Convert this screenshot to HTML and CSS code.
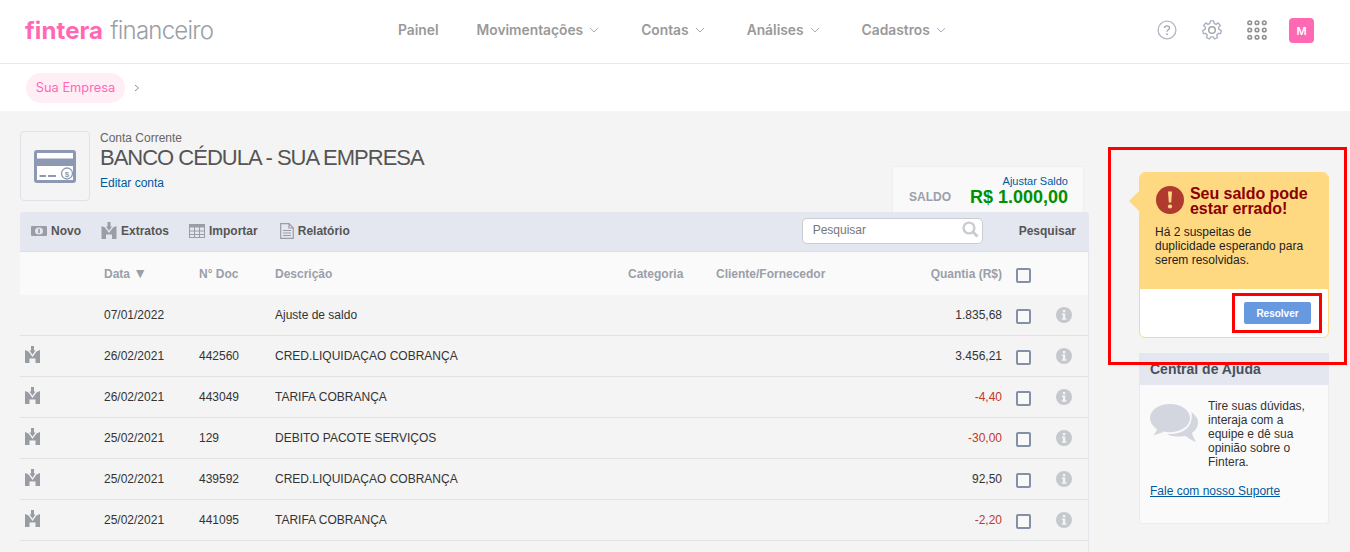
FILE: index.html
```html
<!DOCTYPE html>
<html lang="pt-BR">
<head>
<meta charset="utf-8">
<title>Fintera Financeiro</title>
<link rel="stylesheet" href="styles.css">
</head>
<body>
<svg class="defs" width="0" height="0" aria-hidden="true">
  <symbol id="bank" viewBox="0 0 15 17">
    <path d="M0 4 L3.500 5.500 L7.500 11 L11.500 5.500 L15 4 V17 H10.500 V12.500 H4.500 V17 H0 Z M6 0 H9 V4.500 H10.500 L7.500 8.700 L4.500 4.500 H6 Z"/>
  </symbol>
  <symbol id="info" viewBox="0 0 16 16">
    <circle cx="8" cy="8" r="8" fill="#c5c8cd"/>
    <rect x="6.900" y="3" width="2.400" height="2.300" fill="#f4f4f4"/>
    <path d="M5.900 6.500 H9.300 V11.200 H10.400 V12.800 H5.900 V11.200 H6.900 V8.100 H5.900 Z" fill="#f4f4f4"/>
  </symbol>
  <symbol id="chev" viewBox="0 0 10 6">
    <path d="M1 1 L5 5 L9 1" fill="none" stroke="#a9aeb8" stroke-width="1"/>
  </symbol>
</svg>

<header class="topbar">
  <div class="logo"><span class="logo-a">fintera</span><span class="logo-b">financeiro</span></div>
  <nav class="nav">
    <a class="nav-item nav-plain">Painel</a>
    <a class="nav-item">Movimentações <svg class="chev"><use href="#chev"/></svg></a>
    <a class="nav-item">Contas <svg class="chev"><use href="#chev"/></svg></a>
    <a class="nav-item">Análises <svg class="chev"><use href="#chev"/></svg></a>
    <a class="nav-item">Cadastros <svg class="chev"><use href="#chev"/></svg></a>
  </nav>
  <div class="top-icons">
    <svg class="ti" viewBox="0 0 22 22"><circle cx="11" cy="11" r="9.800" fill="none" stroke="#b4b9c9" stroke-width="1.500"/><path d="M8.200 8.800 C8.200 5.600 13.800 5.600 13.800 8.800 C13.800 10.900 11 10.700 11 13" fill="none" stroke="#a8a8ac" stroke-width="1.500"/><circle cx="11" cy="15.700" r="1" fill="#a8a8ac"/></svg>
    <svg class="ti" viewBox="0 0 22 22"><path d="M9.200 1 H12.800 L13.300 3.800 L15.500 4.800 L17.900 3.200 L20.200 6.200 L18.200 8.200 L18.700 10.200 L21.200 11.500 L20.400 15 L17.600 14.800 L16.200 16.700 L17.100 19.400 L13.900 20.900 L12.400 18.500 L9.600 18.500 L8.100 20.900 L4.900 19.400 L5.800 16.700 L4.400 14.800 L1.600 15 L.8 11.500 L3.300 10.200 L3.800 8.200 L1.800 6.200 L4.100 3.200 L6.500 4.800 L8.700 3.800 Z" fill="none" stroke="#aab0c2" stroke-width="1.500" stroke-linejoin="round"/><circle cx="11" cy="11" r="3.600" fill="none" stroke="#a4a4a8" stroke-width="1.600"/></svg>
    <svg class="ti" viewBox="0 0 22 22" fill="none" stroke="#8f8f8f" stroke-width="1.700">
      <circle cx="3" cy="3" r="2"/><circle cx="11" cy="3" r="2"/><circle cx="19" cy="3" r="2"/>
      <circle cx="3" cy="11" r="2"/><circle cx="11" cy="11" r="2"/><circle cx="19" cy="11" r="2"/>
      <circle cx="3" cy="19" r="2"/><circle cx="11" cy="19" r="2"/><circle cx="19" cy="19" r="2"/>
    </svg>
    <div class="avatar">M</div>
  </div>
</header>

<div class="crumbs">
  <span class="pill">Sua Empresa</span>
  <svg class="crumb-sep" viewBox="0 0 6 8"><path d="M1 1 L4.500 4 L1 7" fill="none" stroke="#8d8d98" stroke-width="1"/></svg>
</div>

<main class="main">
  <section class="content">
    <div class="account">
      <div class="account-id">
        <div class="card-box">
          <svg class="card-ico" viewBox="0 0 42 33">
            <rect width="42" height="33" rx="3" fill="#8d99b2"/>
            <rect x="3" y="3" width="36" height="5.500" fill="#fff"/>
            <rect x="3" y="16" width="36" height="14" fill="#fff"/>
            <rect x="5.500" y="25" width="6.500" height="2" fill="#8d99b2"/>
            <rect x="14" y="25" width="8" height="2" fill="#8d99b2"/>
            <circle cx="33" cy="23.500" r="5.500" fill="none" stroke="#8d99b2" stroke-width="1.300"/>
            <text class="card-dollar" x="33" y="26.500" text-anchor="middle">$</text>
          </svg>
        </div>
        <div class="account-text">
          <div class="account-type">Conta Corrente</div>
          <h1 class="account-name">BANCO CÉDULA - SUA EMPRESA</h1>
          <a class="link edit">Editar conta</a>
        </div>
      </div>
      <div class="balance">
        <a class="link adjust">Ajustar Saldo</a>
        <div class="balance-line"><span class="balance-label">SALDO</span><span class="balance-value">R$ 1.000,00</span></div>
      </div>
    </div>

    <div class="toolbar">
      <a class="tool tool-novo"><svg class="tool-ico" viewBox="0 0 16 12"><rect y="1" width="16" height="10" rx="1" fill="#9a9da5"/><ellipse cx="8" cy="6" rx="4" ry="3.600" fill="#e4e7ef"/><rect x="7.200" y="3.800" width="1.600" height="4.400" fill="#9a9da5"/></svg>Novo</a>
      <a class="tool tool-ext"><svg class="tool-ico bank-ico"><use href="#bank"/></svg>Extratos</a>
      <a class="tool tool-imp"><svg class="tool-ico" viewBox="0 0 16 14"><rect x=".5" y=".5" width="15" height="13" fill="none" stroke="#9a9da5"/><path d="M0 0 H16 V3.500 H0 Z" fill="#9a9da5"/><path d="M5.500 3 V14 M10.500 3 V14 M0 7 H16 M0 10.500 H16" stroke="#9a9da5"/></svg>Importar</a>
      <a class="tool"><svg class="tool-doc" viewBox="0 0 14 16"><path d="M.7 .7 H9 L13.300 5 V15.300 H.7 Z M9 .7 V5 H13.300" fill="none" stroke="#9a9da5" stroke-width="1.200"/><path d="M3 7.500 H11 M3 10 H11 M3 12.500 H11" stroke="#9a9da5"/></svg>Relatório</a>
      <div class="search">
        <span class="search-ph">Pesquisar</span>
        <svg class="search-ico" viewBox="0 0 17 17"><circle cx="7" cy="7" r="5.400" fill="none" stroke="#c9ccd2" stroke-width="2.400"/><path d="M11 11 L15.500 15.500" stroke="#c9ccd2" stroke-width="3"/></svg>
      </div>
      <a class="tool search-label">Pesquisar</a>
    </div>

    <div class="row head">
      <span></span><span>Data <span class="sort">▼</span></span><span>N° Doc</span><span>Descrição</span><span>Categoria</span><span>Cliente/Fornecedor</span><span class="num">Quantia (R$)</span><i class="check"></i><span></span>
    </div>
    <div class="row">
      <span></span><span>07/01/2022</span><span></span><span>Ajuste de saldo</span><span></span><span></span><span class="num">1.835,68</span><i class="check"></i><svg class="info"><use href="#info"/></svg>
    </div>
    <div class="row">
      <svg class="row-bank"><use href="#bank"/></svg><span>26/02/2021</span><span>442560</span><span>CRED.LIQUIDAÇAO COBRANÇA</span><span></span><span></span><span class="num">3.456,21</span><i class="check"></i><svg class="info"><use href="#info"/></svg>
    </div>
    <div class="row">
      <svg class="row-bank"><use href="#bank"/></svg><span>26/02/2021</span><span>443049</span><span>TARIFA COBRANÇA</span><span></span><span></span><span class="num neg">-4,40</span><i class="check"></i><svg class="info"><use href="#info"/></svg>
    </div>
    <div class="row">
      <svg class="row-bank"><use href="#bank"/></svg><span>25/02/2021</span><span>129</span><span>DEBITO PACOTE SERVIÇOS</span><span></span><span></span><span class="num neg">-30,00</span><i class="check"></i><svg class="info"><use href="#info"/></svg>
    </div>
    <div class="row">
      <svg class="row-bank"><use href="#bank"/></svg><span>25/02/2021</span><span>439592</span><span>CRED.LIQUIDAÇAO COBRANÇA</span><span></span><span></span><span class="num">92,50</span><i class="check"></i><svg class="info"><use href="#info"/></svg>
    </div>
    <div class="row">
      <svg class="row-bank"><use href="#bank"/></svg><span>25/02/2021</span><span>441095</span><span>TARIFA COBRANÇA</span><span></span><span></span><span class="num neg">-2,20</span><i class="check"></i><svg class="info"><use href="#info"/></svg>
    </div>
    <div class="row row-tail"></div>
  </section>

  <aside class="side">
    <div class="alert">
      <div class="alert-top">
        <div class="alert-head">
          <svg class="alert-ico" viewBox="0 0 28 28"><circle cx="14" cy="14" r="14" fill="#b03a2e"/><path d="M12 5.500 H16 L15.200 16.500 H12.800 Z" fill="#ffd982"/><circle cx="14" cy="20.500" r="2.100" fill="#ffd982"/></svg>
          <div class="alert-title">Seu saldo pode estar errado!</div>
        </div>
        <p class="alert-text">Há 2 suspeitas de duplicidade esperando para serem resolvidas.</p>
      </div>
      <div class="alert-foot"><button class="btn">Resolver</button></div>
    </div>
    <div class="help">
      <div class="help-head">Central de Ajuda</div>
      <div class="help-body">
        <div class="help-row">
          <svg class="help-ico" viewBox="0 0 48 39"><path d="M20 0 C9 0 0 6 0 14 C0 18.500 3 22.500 7 25 C6.500 27 5 29.500 3.500 31 C7.500 30.500 11.500 28.500 14 27.500 C16 28 18 28.200 20 28.200 C31 28.200 40 22 40 14 C40 6 31 0 20 0 Z" fill="#d3d6df"/><path d="M41.500 8 C44.500 10.500 48 14 48 18.500 C48 23 45.500 26.500 42 29 C42.500 31.500 44.500 35 46 38 C42 36.500 37.500 33.500 35 32 C29 33 22 33 17 30 C29 31 44 26 41.500 8 Z" fill="#d3d6df"/></svg>
          <p class="help-text">Tire suas dúvidas, interaja com a equipe e dê sua opinião sobre o Fintera.</p>
        </div>
        <a class="link support">Fale com nosso Suporte</a>
      </div>
    </div>
  </aside>
</main>

<div class="mark mark-outer"></div>
<div class="mark mark-inner"></div>
</body>
</html>
```
FILE: styles.css
```css
* { box-sizing: border-box; }
html, body { margin: 0; height: 552px; overflow: hidden; }
body { background: #f4f4f4; font-family: "Liberation Sans", Arial, sans-serif; font-size: 12px; color: #333; position: relative; }
.defs { position: absolute; }

.topbar { height: 64px; background: #fff; border-bottom: 1px solid #eaeaea; display: flex; align-items: center; padding: 0 36px 2px 25px; }
.logo { width: 373px; font-family: Inter, sans-serif; font-size: 24px; display: flex; gap: 7px; letter-spacing: .1px; }
.logo-a { color: #ff69b4; font-weight: 700; }
.logo-b { color: #9a9ea6; font-weight: 300; letter-spacing: -.75px; }
.nav { display: flex; gap: 38px; font-family: Inter, sans-serif; font-size: 13.8px; font-weight: 600; color: #999; padding-bottom: 2px; }
.nav-item { display: flex; align-items: center; gap: 6px; margin-right: 4px; white-space: nowrap; }
.nav-plain { margin-right: 0; }
.chev { width: 10px; height: 6px; }
.top-icons { margin-left: auto; display: flex; align-items: center; gap: 25px; }
.ti { width: 20px; height: 20px; display: block; margin-bottom: 1px; }
.avatar { width: 25px; height: 25px; margin-left: -3px; border-radius: 4px; background: #ff69b4; color: #fff; font-family: Inter, sans-serif; font-size: 11px; font-weight: 600; display: flex; align-items: center; justify-content: center; }

.crumbs { height: 47px; background: #fff; display: flex; align-items: center; padding-left: 26px; gap: 9px; }
.pill { height: 30px; width: 99px; border-radius: 15px; background: #ffeef6; color: #ff69b4; font-family: Inter, sans-serif; font-size: 12.8px; display: flex; align-items: center; justify-content: center; }
.crumb-sep { width: 6px; height: 8px; }

.main { display: flex; padding: 20px 21px 0 20px; gap: 50px; }
.content { width: 1069px; flex: none; }
.side { width: 190px; flex: none; padding-top: 41px; display: flex; flex-direction: column; gap: 15px; }

.account { display: flex; justify-content: space-between; align-items: flex-end; padding-right: 5px; height: 81px; }
.account-id { display: flex; gap: 10px; align-self: flex-start; }
.card-box { width: 70px; height: 70px; border: 1px solid #dfe1e8; border-radius: 4px; display: flex; align-items: center; justify-content: center; }
.card-ico { width: 42px; height: 33px; }
.card-dollar { font-size: 8px; font-weight: 700; fill: #8d99b2; }
.account-type { color: #666; line-height: 14px; }
.account-name { margin: 0; font-size: 22px; font-weight: 400; letter-spacing: -1px; color: #555; line-height: 26px; }
.link { color: #005a9e; }
.edit { display: block; margin-top: 5px; line-height: 14px; }
.balance { width: 192px; height: 46px; background: #f9f9f9; border: 1px solid #eee; border-bottom: 0; padding: 8px 15px 0 16px; display: flex; flex-direction: column; align-items: flex-end; }
.adjust { font-size: 11px; line-height: 12px; }
.balance-line { width: 100%; display: flex; justify-content: space-between; align-items: center; line-height: 20px; }
.balance-label { color: #9a9fa9; font-weight: 700; }
.balance-value { color: #009000; font-size: 18px; font-weight: 700; }

.toolbar { height: 40px; background: #e4e7ef; border-bottom: 1px solid #dcdee4; border-radius: 3px 3px 0 0; display: flex; align-items: center; padding: 0 13px 2px 11px; color: #555; font-weight: 700; }
.tool { display: flex; align-items: center; gap: 4px; }
.tool-novo { margin-right: 20px; }
.tool-ext { margin-right: 20px; }
.tool-imp { margin-right: 22px; }
.tool-ico { width: 16px; height: 16px; fill: #9a9da5; }
.bank-ico { height: 17px; }
.tool-doc { width: 14px; height: 16px; }
.search { margin-left: auto; width: 181px; height: 26px; background: #fff; border: 1px solid #c9ccd4; border-radius: 5px; display: flex; align-items: center; justify-content: space-between; padding: 0 3px 2px 10px; color: #777; font-weight: 400; }
.search-ico { width: 17px; height: 17px; }
.search-label { margin-left: 36px; }

.row { display: grid; grid-template-columns: 84px 95px 76px 353px 88px 214px 72px 54px 32px; height: 41px; align-items: center; border-bottom: 1px solid #dfe1e7; border-right: 1px solid #e4e6ec; white-space: nowrap; }
.row > .num { text-align: right; grid-column: 7; }
.row > .check { grid-column: 8; margin-left: 14px; }
.row-tail { height: 11px; border-bottom: 0; }
.head { height: 43px; background: #fafafa; color: #9a9fa9; font-weight: 700; border-bottom: 0; }
.sort { font-size: 14px; line-height: 12px; }
.neg { color: #c0392b; }
.check { display: block; width: 15px; height: 15px; border: 2px solid #8490a8; border-radius: 2px; background: #f9f9f9; margin-top: 2px; }
.head .check { margin-top: 4px; }
.info { width: 16px; height: 16px; }
.row-bank { width: 15px; height: 17px; fill: #999da3; margin-left: 5px; margin-top: -3px; }

.alert { position: relative; border: 1px solid #ffd982; border-radius: 6px; background: #fff; height: 166px; }
.alert::before { content: ""; position: absolute; left: -11px; top: 17px; border: 11px solid transparent; border-left: 0; border-right-color: #ffd982; }
.alert-top { background: #ffd982; height: 116px; border-radius: 5px 5px 0 0; padding: 13px 15px 0; }
.alert-head { display: flex; gap: 6px; }
.alert-ico { width: 28px; height: 28px; flex: none; margin-left: 1px; }
.alert-title { color: #8b0000; font-size: 16px; font-weight: 700; line-height: 15px; letter-spacing: -.05px; }
.alert-text { margin: 9px 0 0; color: #222; line-height: 14px; }
.alert-foot { display: flex; justify-content: flex-end; padding: 13px 17px 0 0; }
.btn { width: 67px; height: 22px; border: 0; border-radius: 2px; background: #6699e0; color: #fff; font: 700 10px "Liberation Sans", Arial, sans-serif; padding: 0; }

.help { height: 171px; background: #fafafa; border-radius: 3px; border: 1px solid #ebecf0; border-top: 0; }
.help-head { height: 32px; background: #e4e7ef; padding: 8px 10px 0 11px; margin: 0 -1px; font-size: 14px; font-weight: 700; color: #4a4f5a; }
.help-body { padding: 14px 10px 0; }
.help-row { display: flex; gap: 10px; height: 85px; }
.help-ico { width: 48px; height: 39px; flex: none; margin-top: 5px; }
.help-text { margin: 0; line-height: 14px; color: #333; }
.support { text-decoration: underline; display: block; }

.mark { position: absolute; border: 3px solid #f00; pointer-events: none; }
.mark-outer { left: 1108px; top: 147px; width: 239px; height: 218px; }
.mark-inner { left: 1232px; top: 293px; width: 90px; height: 40px; }
```
